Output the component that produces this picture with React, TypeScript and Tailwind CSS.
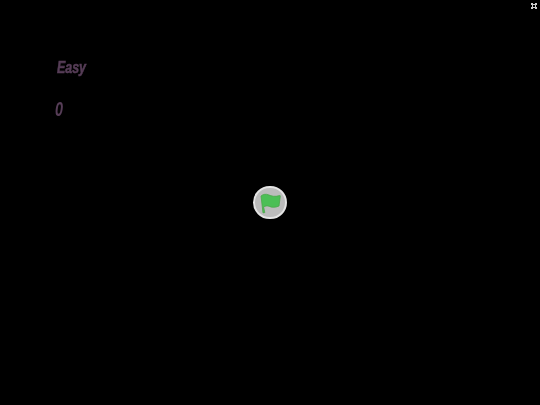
export default function App() {
  return (
    <div className="relative h-[405px] w-[540px] overflow-hidden bg-black font-['Liberation_Sans',sans-serif]">
      {/* HUD labels */}
      <div className="flex flex-col items-start pl-[57px] pt-[59px]">
        <span className="text-[17px] leading-[18px] font-bold italic text-[#563d57] blur-[0.6px] [-webkit-text-stroke:0.6px_#563d57] [transform:scaleX(0.73)] origin-left">Easy</span>
        <span className="-ml-[2px] mt-[22px] text-[20px] leading-[21px] font-bold italic text-[#563d57] blur-[0.5px] [transform:scaleX(0.72)] origin-left">0</span>
      </div>

      {/* fullscreen toggle */}
      <svg className="absolute right-[3px] top-[3px] h-[6px] w-[6px]" viewBox="0 0 6 6" fill="none">
        <path d="M0 0h2v1h1v1H2v1H1V2H0z M6 0H4v1H3v1h1v1h1V2h1z M0 6h2V5h1V4H2V3H1v1H0z M6 6H4V5H3V4h1V3h1v1h1z" fill="#cfcfcf" />
      </svg>

      {/* green flag start button */}
      <div className="absolute left-[253px] top-[186px] flex h-[33px] w-[34px] items-center justify-center rounded-full border-2 border-[#e4e4e4] bg-[#bcbcbc]">
        <svg className="h-[24px] w-[24px]" viewBox="0 0 24 24">
          <path
            d="M3 5 C5 3.2 8 2.8 10.4 3.8 C13.4 5.2 17 6 21.6 4.6 C22.2 4.4 22.4 4.8 22.3 5.2 L21 15 C17.6 16.6 14 16.6 11.4 15.4 C9.4 14.6 7.2 14.8 5.6 16 L6.8 21.6 L5 21.9 Z"
            fill="#4cbf56"
            stroke="#4aa84a"
            strokeWidth="0.8"
            strokeLinejoin="round"
          />
        </svg>
      </div>
    </div>
  )
}
